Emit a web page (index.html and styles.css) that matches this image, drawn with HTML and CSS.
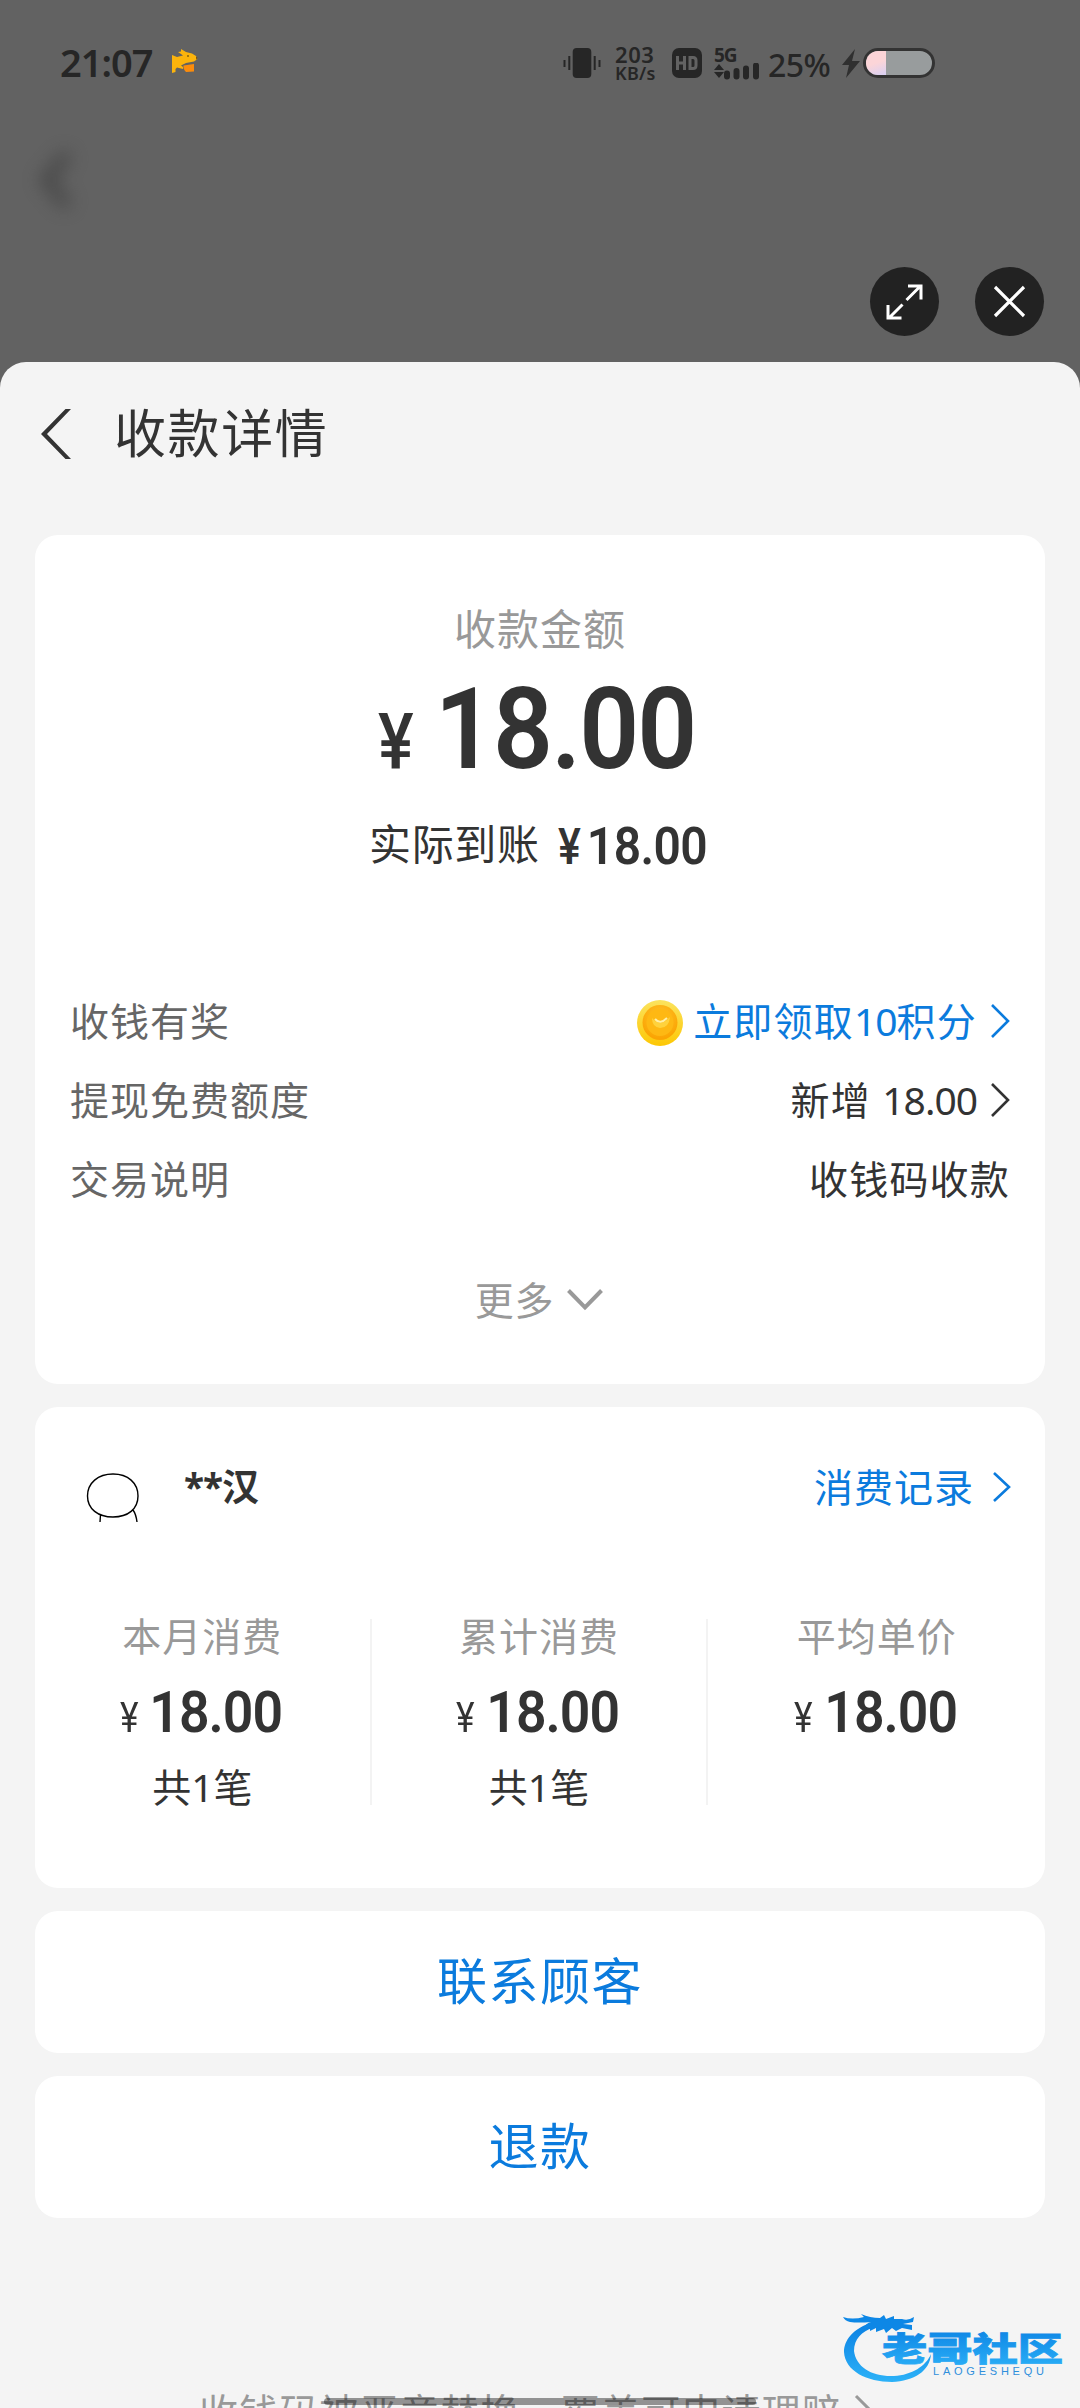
FILE: index.html
```html
<!DOCTYPE html>
<html lang="zh-CN">
<head>
<meta charset="utf-8">
<title>收款详情</title>
<link rel="stylesheet" href="styles.css">
</head>
<body>
<div class="screen">
  <header class="backdrop">
    <div class="status">
      <span class="time">21:07</span>
      <svg class="dog" width="26" height="26" viewBox="0 0 26 26"><path d="M0 6 5 8 11 6.500 9 5 6 3 9 2.500 9 0 14 3 20 4.500 24 7 25.500 10 22 12.500 14 14 9 16.500 11 18V20L5 18.500 3.500 20V23L0 24Z" fill="#fcb40c"/><path d="M11.500 16.500 22 15V22.500L14 23Q11 20 11.500 16.500Z" fill="#fb8c0c"/><circle cx="16" cy="7" r=".8" fill="#33270c"/><path d="M24 7.500 25.500 9 24.500 11Z" fill="#5a3c10"/></svg>
      <svg class="vibrate" width="38" height="32" viewBox="0 0 38 32"><rect x="9.700" y="1" width="18.600" height="30" rx="4" fill="#262626"/><path d="M1.500 13v7M6.300 9v14M31.700 9v14M36.500 13v7" stroke="#262626" stroke-width="2"/></svg>
      <span class="speed"><b>203</b><i>KB/s</i></span>
      <span class="hd"><svg width="22" height="14" viewBox="0 0 22 14"><path d="M1.500 0v14M8.500 0v14M1.500 7h7M14 1.500h3q3 0 3 3v5q0 3-3 3h-3z" fill="none" stroke="#626262" stroke-width="3"/></svg></span>
      <span class="signal"><span class="net">5G</span>
        <svg width="46" height="18" viewBox="0 0 46 18"><path d="M0 7 5 1 10 7ZM0 9H10L5 15Z" fill="#262626"/><path d="M13 10.500v3M22.500 8v5.500M32 5.500v8M42 2.500v11" stroke="#262626" stroke-width="6" stroke-linecap="round"/></svg></span>
      <span class="percent">25%</span>
      <svg class="bolt" width="18" height="29" viewBox="0 0 18 29"><path d="M13 0 0 16H7L4 29 18 12H10Z" fill="#303030"/></svg>
      <span class="battery"><span class="level"></span></span>
    </div>
    <svg class="ghost" width="90" height="110" viewBox="0 0 90 110"><path d="M62 28 40 54 62 80" fill="none" stroke="#3d3d3d" stroke-width="12"/></svg>
    <div class="controls">
      <span class="round"><svg width="69" height="69" viewBox="0 0 69 69"><path d="M36.500 33 50 19.500M38 19H51V32.500M32.500 37.500 19 51M18 38V51H31.500" fill="none" stroke="#fff" stroke-width="3"/></svg></span>
      <span class="round"><svg width="69" height="69" viewBox="0 0 69 69"><path d="M20 20 49 49M49 20 20 49" stroke="#fff" stroke-width="3.200"/></svg></span>
    </div>
  </header>

  <main class="sheet">
    <div class="titlebar">
      <svg width="34" height="52" viewBox="0 0 34 52"><path d="M26.500 1H32L8 26 32 51H26.500L2 26Z" fill="#333"/></svg>
      <h1>收款详情</h1>
    </div>

    <section class="card summary">
      <div class="caption">收款金额</div>
      <div class="amount"><span class="yen">¥</span><span class="num">18.00</span></div>
      <div class="received"><span>实际到账</span><span class="yen">¥</span><span class="num">18.00</span></div>
      <div class="rows">
        <div class="row"><span>收钱有奖</span><span class="value link">
          <svg class="coin" width="46" height="46" viewBox="0 0 46 46"><defs><linearGradient id="rim" x1="0" y1="0" x2="0" y2="1"><stop offset="0" stop-color="#fbe35e"/><stop offset="1" stop-color="#fdc704"/></linearGradient><radialGradient id="face" cx=".5" cy=".35" r=".6"><stop offset="0" stop-color="#ffc52c"/><stop offset="1" stop-color="#fba403"/></radialGradient></defs><circle cx="23" cy="23" r="23" fill="url(#rim)"/><circle cx="23" cy="22.500" r="17.500" fill="url(#face)"/><circle cx="23" cy="22.500" r="13.500" fill="#feb813"/><path d="M15 18Q23 28 33 17Q32 28 23 28Q15 27 15 18Z" fill="#ffd23c"/><path d="M18 19Q23 25 30 18" stroke="#fff0a8" stroke-width="2" fill="none"/></svg>
          <span>立即领取<span class="digits">10</span>积分</span><svg class="go" width="20" height="36" viewBox="0 0 20 36"><path d="M2 2 18 18 2 34"/></svg></span></div>
        <div class="row"><span>提现免费额度</span><span class="value"><span>新增 <span class="digits">18.00</span></span><svg class="go" width="20" height="36" viewBox="0 0 20 36"><path d="M2 2 18 18 2 34"/></svg></span></div>
        <div class="row"><span>交易说明</span><span class="value">收钱码收款</span></div>
      </div>
      <div class="more"><span>更多</span><svg width="36" height="22" viewBox="0 0 36 22"><path d="M1.500 1.500 18 18.500 34.500 1.500" fill="none" stroke="#999" stroke-width="4"/></svg></div>
    </section>

    <section class="card customer">
      <div class="who">
        <svg class="avatar" width="54" height="50" viewBox="0 0 54 50"><path d="M27 1C42 1 52 10 52 23C52 36 42 44 27 44C12 44 1.500 36 1.500 23C1.500 10 12 1 27 1ZM14.500 42 14 49M47 37Q50 41 51 49" fill="none" stroke="#000" stroke-width="1.400"/></svg>
        <span class="name">**汉</span>
        <span class="value link"><span>消费记录</span><svg class="go" width="20" height="32" viewBox="0 0 20 32"><path d="M3 2 18 16 3 30"/></svg></span>
      </div>
      <div class="stats">
        <div class="stat"><span class="label">本月消费</span><span class="sum"><span class="yen">¥</span><span class="num">18.00</span></span><span class="count">共1笔</span></div>
        <div class="stat"><span class="label">累计消费</span><span class="sum"><span class="yen">¥</span><span class="num">18.00</span></span><span class="count">共1笔</span></div>
        <div class="stat"><span class="label">平均单价</span><span class="sum"><span class="yen">¥</span><span class="num">18.00</span></span></div>
      </div>
    </section>

    <div class="card action">联系顾客</div>
    <div class="card action">退款</div>

    <div class="notice"><span>收钱码被恶意替换，覆盖可申请理赔</span><svg width="20" height="36" viewBox="0 0 20 36"><path d="M2 2 18 18 2 34" fill="none" stroke="#999" stroke-width="3"/></svg></div>
  </main>

  <div class="homebar"></div>
  <svg class="brand" width="226" height="78" viewBox="0 0 226 78">
    <defs><linearGradient id="sea" x1="0" y1="0" x2="0" y2="1"><stop offset="0" stop-color="#0a7fe2"/><stop offset="1" stop-color="#2cb2f8"/></linearGradient></defs>
    <path d="M32 11C10 17 2 30 2 41C3 60 25 71 50 71C72 70 88 60 89 43C84 55 70 64 52 65C30 66 14 56 12 40C12 28 20 20 31 17Z" fill="url(#sea)"/>
    <path d="M1 6Q10 9 22 6L19 3Q28 7 38 7L42 4 44 8 52 5 52 8 60 8Q66 10 72 6L71 11 61 13 70 14 70 19 60 17 54 20 50 17 44 22 42 18 34 21 34 17 28 20 28 16 21 18Q24 12 29 11 16 12 8 11 3 10 1 6Z" fill="#0d87e6"/>
    <g fill="url(#sea)" stroke="url(#sea)" stroke-width=".8" class="brandname"><text x="40" y="50" textLength="181" lengthAdjust="spacingAndGlyphs">老哥社区</text></g>
    <text class="brandlatin" x="91" y="63.500" textLength="111">LAOGESHEQU</text>
  </svg>
</div>
</body>
</html>
```
FILE: styles.css
```css
* { box-sizing: border-box; }
body { margin: 0; background: #626262; }
svg { display: block; flex: none; }
.screen {
  position: relative; width: 1080px; height: 2408px; overflow: hidden;
  background: #626262; color: #333;
  font-family: "Noto Sans", "Noto Sans CJK SC", sans-serif;
}
.backdrop { height: 362px; }

/* status bar */
.status { display: flex; align-items: center; height: 126px; padding: 0 143px 0 60px; color: #262626; }
.time { font-size: 38px; font-weight: 600; letter-spacing: -1px; width: 112px; white-space: nowrap; line-height: 50px; margin-top: -2px; }
.dog { margin-top: -2px; }
.vibrate { margin-left: 365px; }
.speed { display: flex; flex-direction: column; margin-left: 14px; width: 57px; }
.speed b { font-size: 22px; line-height: 20px; font-weight: 600; letter-spacing: .6px; }
.speed i { font-size: 18px; line-height: 18px; font-weight: 600; font-style: normal; letter-spacing: .3px; }
.hd { display: flex; align-items: center; justify-content: center; width: 30px; height: 30px; border-radius: 7px; background: #262626; }
.signal { display: flex; flex-direction: column; margin-left: 12px; width: 54px; height: 32px; }
.net { font-size: 19px; line-height: 16px; font-weight: 700; letter-spacing: -1px; }
.percent { font-size: 32px; font-weight: 500; letter-spacing: -.5px; width: 74px; padding-top: 4px; line-height: 36px; }
.battery { width: 72px; height: 30px; margin-left: 3px; border: 3px solid #333; border-radius: 15px; background: #989c9d; overflow: hidden; }
.level { display: block; width: 20px; height: 100%; background: linear-gradient(160deg, #fcd5d8 50%, #d8d0f4); }

.ghost { margin: 0 0 0 6px; filter: blur(9px); opacity: .7; }
.controls { display: flex; justify-content: flex-end; gap: 36px; padding-right: 36px; margin-top: 31px; }
.round { width: 69px; height: 69px; border-radius: 50%; background: #222; }

/* sheet */
.sheet { height: 2046px; background: #f4f4f4; border-radius: 26px 26px 0 0; padding: 0 35px; overflow: hidden; }
.titlebar { display: flex; align-items: center; gap: 41px; height: 144px; margin-bottom: 29px; padding-left: 4px; }
.titlebar h1 { margin: -3px 0 0; font-size: 52px; font-weight: 400; letter-spacing: 1.600px; line-height: 72px; }
.card { background: #fff; border-radius: 23px; margin-bottom: 23px; }
.yen, .num { font-family: Roboto, sans-serif; }

.summary { height: 849px; padding: 64px 35px 0; }
.caption { text-align: center; font-size: 42px; line-height: 60px; letter-spacing: 1px; color: #999; }
.amount { display: flex; justify-content: center; align-items: baseline; height: 112px; margin-top: 15px; line-height: 112px; font-weight: 600; }
.amount .yen { font-size: 78px; font-weight: 500; transform: scaleX(.86); }
.amount .num { font-size: 113px; letter-spacing: -2px; margin-left: 9px; transform: scaleX(.93); }
.received { display: flex; justify-content: center; align-items: baseline; margin-top: 27px; font-size: 42px; line-height: 60px; height: 60px; letter-spacing: .7px; }
.received .yen { margin-left: 16px; font-size: 50px; font-weight: 500; transform: translateY(4px) scaleX(.86); }
.received .num { font-size: 51px; font-weight: 600; letter-spacing: -.6px; transform: translateY(4px) scaleX(.94); }
.rows { display: flex; flex-direction: column; gap: 19px; margin-top: 118px; }
.row { display: flex; justify-content: space-between; align-items: center; height: 60px; font-size: 39px; line-height: 60px; letter-spacing: 1px; color: #666; }
.value { display: flex; align-items: center; color: #333; letter-spacing: 1.200px; }
.digits { letter-spacing: -1px; }
.link { color: #0b7bdd; }
.coin { margin: 4px 10px 0 0; }
.go { margin-left: 13px; fill: none; stroke: currentColor; stroke-width: 2.600; }
.more { display: flex; justify-content: center; align-items: center; gap: 13px; margin-top: 61px; padding-right: 2px; font-size: 39px; line-height: 60px; letter-spacing: .8px; color: #999; }

.customer { height: 481px; padding: 50px 0 0; }
.who { display: flex; align-items: center; height: 60px; padding: 0 34px 0 51px; font-size: 39px; line-height: 60px; }
.avatar { margin-top: 22px; }
.name { font-weight: 700; font-size: 37px; margin-left: 44px; flex: 1; letter-spacing: -1px; }
.who .value { letter-spacing: 1px; }
.who .go { margin-left: 17px; }
.stats { display: grid; grid-template-columns: repeat(3, 1fr); grid-template-rows: 186px; height: 186px; margin-top: 102px; }
.stat { display: flex; flex-direction: column; align-items: center; border-right: 2px solid #f3f3f3; height: 186px; }
.stat:last-child { border-right: 0; }
.label { font-size: 39px; line-height: 60px; margin-top: -13px; letter-spacing: 1px; color: #999; }
.sum { display: flex; align-items: baseline; height: 56px; line-height: 56px; margin-top: 19px; }
.sum .yen { font-size: 43px; transform: scaleX(.82); }
.sum .num { font-size: 57px; font-weight: 600; letter-spacing: -1px; margin-left: 5px; transform: scaleX(.94); }
.count { font-size: 39px; line-height: 60px; margin-top: 16px; }

.action { height: 142px; line-height: 140px; text-align: center; font-size: 50px; letter-spacing: 1.500px; color: #0b7bdd; }

.notice { display: flex; align-items: center; gap: 12px; margin-top: 164px; padding-left: 164px; font-size: 39px; line-height: 60px; letter-spacing: 1.200px; color: #999; white-space: nowrap; }

/* system home indicator and site mark lie over the sheet */
.homebar { position: absolute; left: 324px; top: 2398px; width: 432px; height: 7px; border-radius: 4px; background: rgba(0, 0, 0, .4); }
.brand { position: absolute; left: 842px; top: 2311px; }
.brandname { font: 900 33px "Noto Sans CJK SC", sans-serif; }
.brandlatin { font: 400 11px "Liberation Sans", sans-serif; fill: #2f8fdc; }
```
